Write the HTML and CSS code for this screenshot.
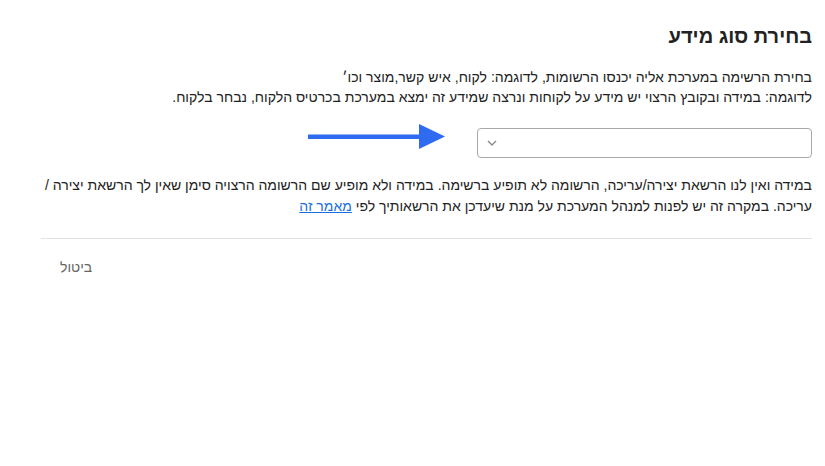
FILE: index.html
```html
<!DOCTYPE html>
<html lang="he" dir="rtl">
<head>
<meta charset="utf-8">
<link rel="stylesheet" href="styles.css">
</head>
<body>
<div class="dialog">
  <h1 class="title">בחירת סוג מידע</h1>
  <p class="desc">בחירת הרשימה במערכת אליה יכנסו הרשומות, לדוגמה: לקוח, איש קשר,מוצר וכו׳<br>לדוגמה: במידה ובקובץ הרצוי יש מידע על לקוחות ונרצה שמידע זה ימצא במערכת בכרטיס הלקוח, נבחר בלקוח.</p>
  <div class="select-row">
    <div class="select">
      <svg class="chev" width="10" height="6" viewBox="0 0 10 6"><path d="M1 1 L5 5 L9 1" fill="none" stroke="#8a8a8a" stroke-width="1.4"/></svg>
    </div>
    <svg class="arrow" width="138" height="26" viewBox="0 0 138 26"><rect x="0" y="10.5" width="113" height="4.5" fill="#2f6bf0"/><path d="M111 0 L137 12.5 L111 25 Z" fill="#2f6bf0"/></svg>
  </div>
  <p class="note">במידה ואין לנו הרשאת יצירה/עריכה, הרשומה לא תופיע ברשימה. במידה ולא מופיע שם הרשומה הרצויה סימן שאין לך הרשאת יצירה / עריכה. במקרה זה יש לפנות למנהל המערכת על מנת שיעדכן את הרשאותיך לפי <a href="#" class="link">מאמר זה</a></p>
  <hr class="divider">
  <div class="footer">
    <button class="cancel">ביטול</button>
  </div>
</div>
</body>
</html>
```

FILE: styles.css
```css
html, body {
  margin: 0;
  padding: 0;
  background: #fff;
}
body {
  font-family: "Liberation Sans", Arial, sans-serif;
  color: #222;
}
.dialog {
  padding: 24px 13px 0 28px;
}
.title {
  margin: 0;
  font-size: 20px;
  font-weight: bold;
  line-height: 24px;
  color: #222;
}
.desc {
  margin: 19px 0 0 0;
  font-size: 14px;
  line-height: 20px;
}
.select-row {
  display: flex;
  align-items: flex-start;
  margin-top: 21px;
}
.select {
  width: 324px;
  height: 28px;
  border: 1px solid #a8a8a8;
  border-radius: 4px;
  display: flex;
  align-items: center;
  justify-content: flex-end;
  padding-left: 9px;
  box-sizing: content-box;
}
.chev {
  display: block;
}
.arrow {
  display: block;
  margin-right: 31px;
  margin-top: -4px;
}
.note {
  margin: 17px 0 0 0;
  font-size: 14px;
  line-height: 21px;
}
.link {
  color: #1a6ee0;
  text-decoration: underline;
}
.divider {
  border: 0;
  border-top: 1px solid #e3e3e3;
  margin: 21px 0 0 13px;
}
.footer {
  display: flex;
  justify-content: flex-end;
  padding-left: 13px;
  margin-top: 10px;
}
.cancel {
  font-family: "Liberation Sans", Arial, sans-serif;
  font-size: 14px;
  color: #666;
  background: none;
  border: 0;
  padding: 8px 19px;
  line-height: 20px;
  cursor: pointer;
}
```
